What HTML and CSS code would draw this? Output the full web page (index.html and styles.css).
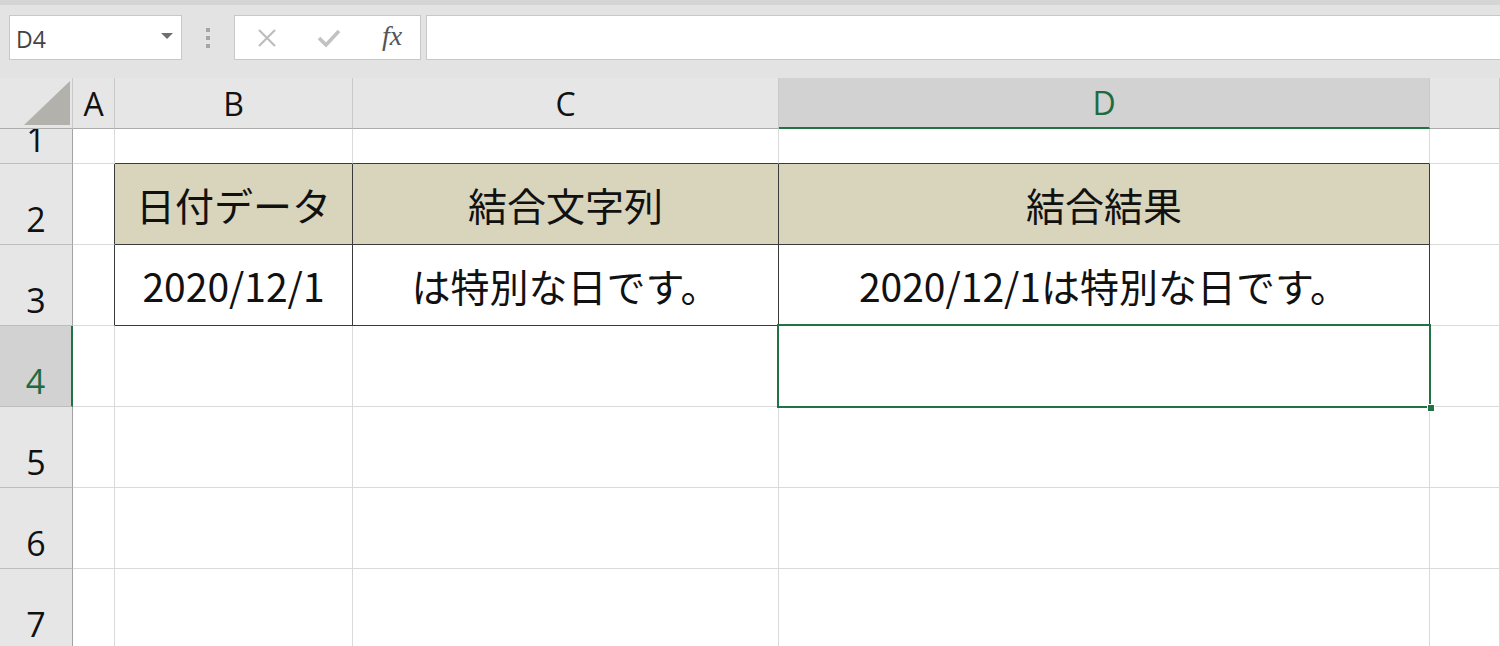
FILE: index.html
```html
<!DOCTYPE html>
<html lang="ja">
<head>
  <meta charset="UTF-8" />
  <meta name="viewport" content="width=device-width, initial-scale=1.0" />
  <title>日付と文字列の結合</title>
  <link rel="stylesheet" href="styles.css">
</head>
<body>
  <div class="top-edge"></div>

  <div class="formula-bar">
    <div class="name-box">
      <span>D4</span>
      <span class="caret"></span>
    </div>
    <div class="grip"><i></i><i></i><i></i></div>
    <div class="fx-buttons">
      <svg class="btn-icon" width="22" height="22" viewBox="0 0 22 22">
        <path d="M3 3 L19 19 M19 3 L3 19" stroke="#bdbdbd" stroke-width="2.2" fill="none" />
      </svg>
      <svg class="btn-icon" width="26" height="22" viewBox="0 0 26 22">
        <path d="M3 11 L10 18 L23 4" stroke="#c2c2c2" stroke-width="3.6" fill="none" />
      </svg>
      <span class="fx">fx</span>
    </div>
    <div class="formula-input"></div>
  </div>

  <div class="sheet">
    <!-- column headers -->
    <div class="cell corner">
      <svg width="72" height="50" viewBox="0 0 72 50">
        <polygon points="24,47 70,47 70,3" fill="#b3b1ab" />
      </svg>
    </div>
    <div class="cell col-head">A</div>
    <div class="cell col-head">B</div>
    <div class="cell col-head">C</div>
    <div class="cell col-head selected">D</div>
    <div class="cell col-head"></div>

    <!-- 1 -->
    <div class="cell row-head first">1</div>
    <div class="cell"></div>
    <div class="cell above"></div>
    <div class="cell above"></div>
    <div class="cell above"></div>
    <div class="cell"></div>

    <!-- 2 -->
    <div class="cell row-head">2</div>
    <div class="cell before"></div>
    <div class="cell tbl th">日付データ</div>
    <div class="cell tbl th">結合文字列</div>
    <div class="cell tbl th">結合結果</div>
    <div class="cell"></div>

    <!-- 3 -->
    <div class="cell row-head">3</div>
    <div class="cell before"></div>
    <div class="cell tbl">2020/12/1</div>
    <div class="cell tbl">は特別な日です。</div>
    <div class="cell tbl">2020/12/1は特別な日です。</div>
    <div class="cell"></div>

    <!-- 4 -->
    <div class="cell row-head selected">4</div>
    <div class="cell"></div>
    <div class="cell"></div>
    <div class="cell"></div>
    <div class="cell active"><span class="fill-handle"></span></div>
    <div class="cell"></div>

    <!-- 5 -->
    <div class="cell row-head">5</div>
    <div class="cell"></div>
    <div class="cell"></div>
    <div class="cell"></div>
    <div class="cell"></div>
    <div class="cell"></div>

    <!-- 6 -->
    <div class="cell row-head">6</div>
    <div class="cell"></div>
    <div class="cell"></div>
    <div class="cell"></div>
    <div class="cell"></div>
    <div class="cell"></div>

    <!-- 7 -->
    <div class="cell row-head">7</div>
    <div class="cell"></div>
    <div class="cell"></div>
    <div class="cell"></div>
    <div class="cell"></div>
    <div class="cell"></div>
  </div>
</body>
</html>
```

FILE: styles.css
```css
* {
  box-sizing: border-box;
}
html, body {
  margin: 0;
  height: 100%;
  overflow: hidden;
}
body {
  background: #fff;
  font-family: "Noto Sans CJK JP", sans-serif;
  color: #111;
}

/* toolbar */
.top-edge {
  height: 5px;
  background: #d5d5d5;
}
.formula-bar {
  height: 73px;
  background: #e3e3e3;
  display: flex;
  align-items: flex-start;
  padding: 10px 0 0 9px;
}
.name-box {
  width: 173px;
  height: 45px;
  background: #fff;
  border: 1px solid #c8c8c8;
  display: flex;
  align-items: center;
  justify-content: space-between;
  padding: 2px 8px 0 6px;
  font-family: "Open Sans", sans-serif;
  font-size: 23px;
  color: #444;
}
.caret {
  width: 0;
  height: 0;
  border-left: 6px solid transparent;
  border-right: 6px solid transparent;
  border-top: 6px solid #6f6f6f;
  margin-bottom: 6px;
}
.grip {
  width: 52px;
  height: 45px;
  display: flex;
  flex-direction: column;
  align-items: center;
  justify-content: center;
  gap: 4px;
}
.grip i {
  width: 4px;
  height: 4px;
  background: #a6a6a6;
}
.fx-buttons {
  width: 187px;
  height: 45px;
  background: #fff;
  border: 1px solid #c8c8c8;
  display: flex;
  align-items: center;
  padding-left: 21px;
  gap: 38px;
}
.fx {
  font-family: "Liberation Serif", serif;
  font-style: italic;
  font-size: 28px;
  color: #555;
  margin-left: 2px;
  margin-top: -4px;
}
.formula-input {
  flex: 1;
  height: 45px;
  margin-left: 5px;
  background: #fff;
  border: 1px solid #c8c8c8;
  border-right: none;
}

/* grid */
.sheet {
  display: grid;
  grid-template-columns: 73px 42px 238px 426px 651px 1fr;
  grid-template-rows: 51px 35px repeat(6, 81px);
}
.cell {
  border-right: 1px solid #dadada;
  border-bottom: 1px solid #dadada;
  display: flex;
  align-items: center;
  justify-content: center;
  font-size: 39px;
  white-space: nowrap;
}
.corner {
  background: #e6e6e6;
  border-right-color: #c9c9c9;
  border-bottom-color: #acacac;
}
.col-head {
  background: #e6e6e6;
  border-right-color: #c9c9c9;
  border-bottom-color: #acacac;
  font-family: "Open Sans", sans-serif;
  font-size: 32px;
  color: #111;
}
.col-head.selected {
  background: #d2d2d2;
  border-bottom: 2px solid #217346;
  color: #1e6b41;
}
.row-head {
  background: #e6e6e6;
  border-right-color: #a3a3a3;
  border-bottom-color: #bdbdbd;
  align-items: flex-end;
  overflow: hidden;
  padding-bottom: 8px;
  font-family: "Open Sans", sans-serif;
  font-size: 34px;
  line-height: 34px;
}
/* row 1 is short, its number sits lower and is clipped at the top */
.row-head.first {
  padding-bottom: 7px;
}
.row-head.selected {
  background: #d2d2d2;
  border-right: 2px solid #217346;
  color: #1e6b41;
}

/* bordered table B2:D3 */
.above {
  border-bottom-color: #3a3a3a;
}
.before {
  border-right-color: #3a3a3a;
}
.tbl {
  border-right-color: #3a3a3a;
  border-bottom-color: #3a3a3a;
}
.th {
  background: #d9d4bc;
}

/* active cell D4 */
.active {
  position: relative;
}
.active::after {
  content: "";
  position: absolute;
  left: -2px;
  top: -2px;
  right: -2px;
  bottom: -2px;
  border: 2px solid #217346;
}
.fill-handle {
  position: absolute;
  right: -6px;
  bottom: -6px;
  width: 8px;
  height: 8px;
  background: #217346;
  border: 1px solid #fff;
  z-index: 1;
}
```
